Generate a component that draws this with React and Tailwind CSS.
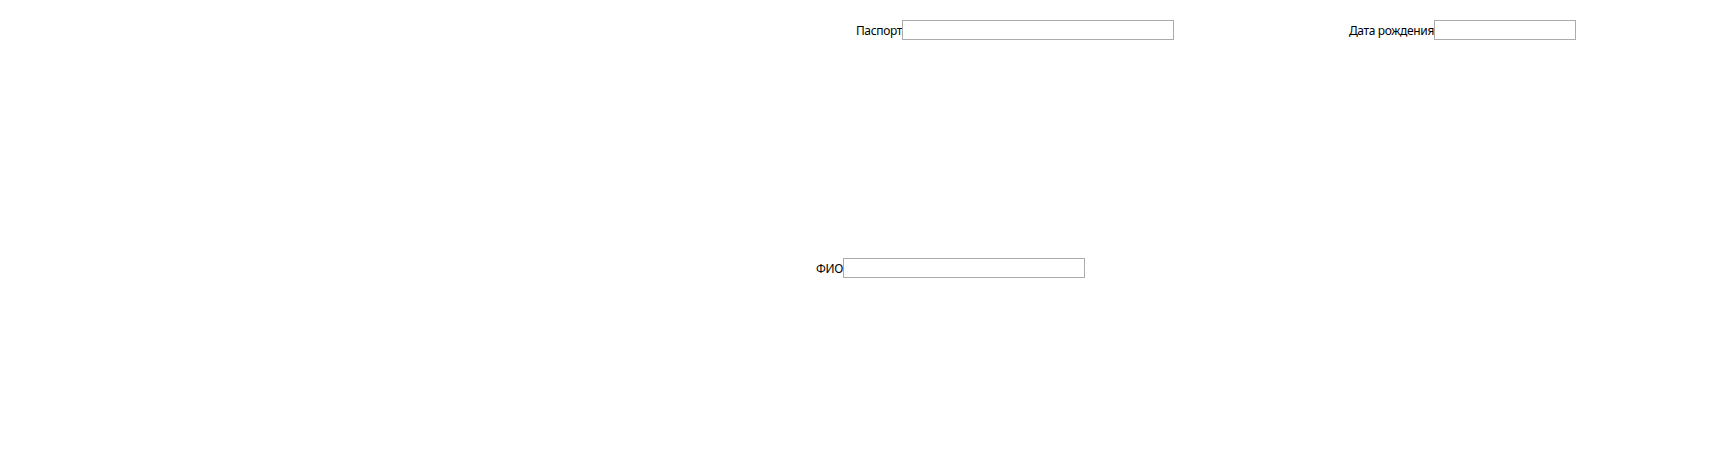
import React from 'react';

function Field({ labelWidth, label, inputWidth }) {
  return (
    <>
      <div className={`${labelWidth} text-right whitespace-nowrap leading-[20px] tracking-[-0.35px] pt-[1px]`}>{label}</div>
      <input className={`${inputWidth} h-[20px] border border-[#ababab] bg-white outline-none px-1`} />
    </>
  );
}

export default function App() {
  return (
    <div
      className="w-[1734px] h-[457px] bg-white text-black text-[12px]"
      style={{ fontFamily: '"Noto Sans", "Open Sans", sans-serif' }}
    >
      <div className="flex items-start h-[20px] mt-[20px]">
        <Field labelWidth="w-[902px]" label="Паспорт" inputWidth="w-[272px]" />
        <Field labelWidth="w-[260px]" label="Дата рождения" inputWidth="w-[142px]" />
      </div>
      <div className="flex items-start h-[20px] mt-[218px]">
        <Field labelWidth="w-[843px]" label="ФИО" inputWidth="w-[242px]" />
      </div>
    </div>
  );
}
